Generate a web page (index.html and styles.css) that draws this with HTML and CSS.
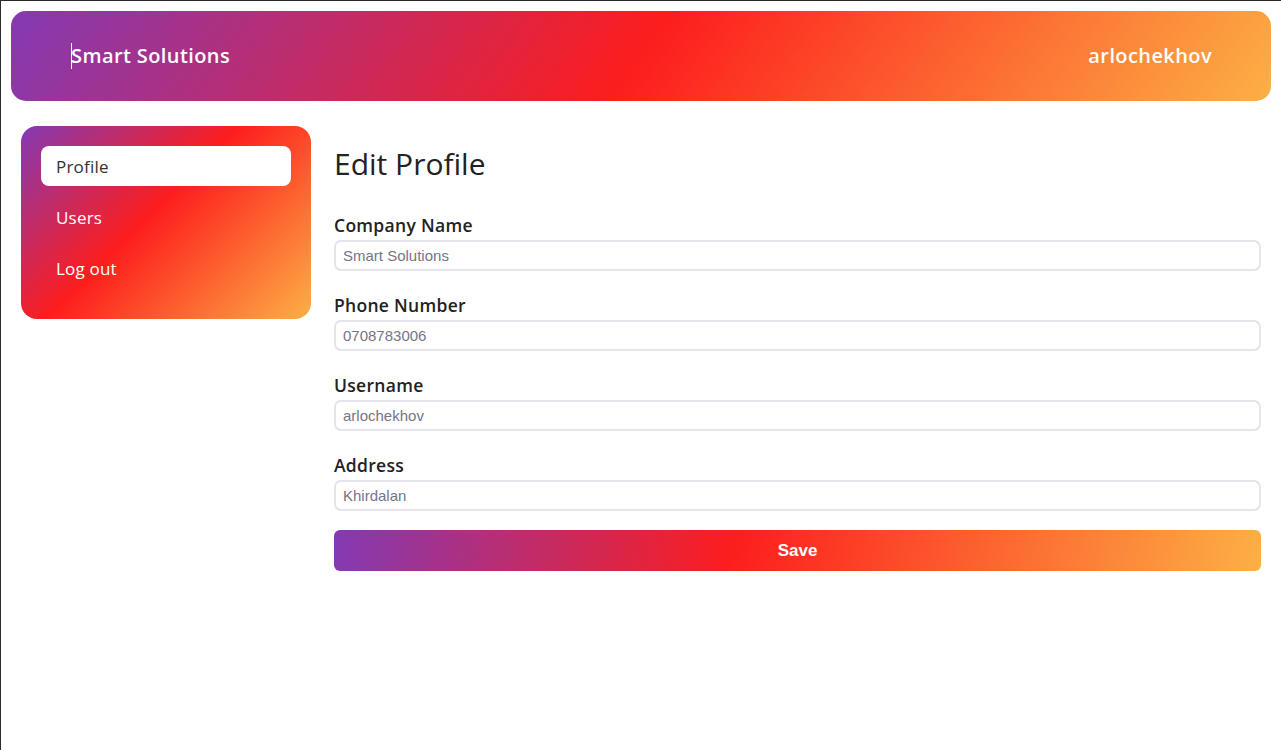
FILE: index.html
```html
<!DOCTYPE html>
<html lang="en">
<head>
<meta charset="utf-8">
<title>Edit Profile</title>
<link rel="stylesheet" href="styles.css">
</head>
<body>
<div class="frame">
  <header class="topbar">
    <div class="brand"><span class="caret"></span>Smart Solutions</div>
    <div class="user">arlochekhov</div>
  </header>
  <div class="content">
    <nav class="sidebar">
      <a class="nav-item active" href="#">Profile</a>
      <a class="nav-item" href="#">Users</a>
      <a class="nav-item" href="#">Log out</a>
    </nav>
    <main class="main">
      <h1 class="title">Edit Profile</h1>
      <form class="form">
        <div class="field">
          <label class="label">Company Name</label>
          <input class="input" type="text" placeholder="Smart Solutions">
        </div>
        <div class="field">
          <label class="label">Phone Number</label>
          <input class="input" type="text" placeholder="0708783006">
        </div>
        <div class="field">
          <label class="label">Username</label>
          <input class="input" type="text" placeholder="arlochekhov">
        </div>
        <div class="field">
          <label class="label">Address</label>
          <input class="input" type="text" placeholder="Khirdalan">
        </div>
        <button class="save" type="button">Save</button>
      </form>
    </main>
  </div>
</div>
</body>
</html>
```
FILE: styles.css
```css
* { box-sizing: border-box; }
html, body { margin: 0; padding: 0; background: #fff; }
body { font-family: "Open Sans", "Liberation Sans", sans-serif; color: #222; }
.frame {
  min-height: 750px;
  border-top: 1px solid #2a2a2a;
  border-left: 1px solid #2a2a2a;
}
.topbar {
  margin: 10px 10px 0 10px;
  height: 90px;
  border-radius: 15px;
  background: linear-gradient(125deg, #833ab4 0%, #fd1d1d 50%, #fcb045 100%);
  display: flex;
  align-items: center;
  justify-content: space-between;
  padding: 0 59px 0 60px;
  color: #fff;
}
.brand, .user {
  font-size: 20px;
  font-weight: 600;
  letter-spacing: 0.4px;
  display: flex;
  align-items: center;
  margin-top: -1px;
}
.caret {
  display: inline-block;
  width: 1px;
  height: 26px;
  background: #fff;
  margin-right: -1px;
}
.content {
  display: flex;
  padding: 25px 20px 0 20px;
  gap: 23px;
}
.sidebar {
  width: 290px;
  flex: none;
  align-self: flex-start;
  border-radius: 16px;
  background: linear-gradient(135deg, #833ab4 0%, #fd1d1d 45%, #fcb045 100%);
  padding: 20px 20px 31px;
  display: flex;
  flex-direction: column;
  gap: 11px;
}
.nav-item {
  display: flex;
  align-items: center;
  height: 40px;
  padding-left: 15px;
  border-radius: 8px;
  color: #fff;
  text-decoration: none;
  font-size: 17px;
  font-weight: 500;
  letter-spacing: 0.2px;
}
.nav-item.active {
  background: #fff;
  color: #333;
  font-weight: 400;
}
.main { flex: 1; min-width: 0; }
.title {
  margin: 18px 0 26px;
  font-size: 30px;
  font-weight: 500;
  line-height: 40px;
  color: #222;
}
.form { display: flex; flex-direction: column; gap: 19px; }
.field { display: flex; flex-direction: column; }
.label {
  font-size: 17.5px;
  font-weight: 600;
  letter-spacing: 0.3px;
  color: #222;
  line-height: 24px;
  padding-top: 3px;
  margin-bottom: 3px;
}
.input {
  height: 31px;
  border: 2px solid #e4e4ea;
  border-radius: 7px;
  padding: 0 7px;
  font-family: "Liberation Sans", Arial, sans-serif;
  font-size: 15px;
  background: #fff;
  outline: none;
}
.input::placeholder { color: #757588; }
.save {
  height: 41px;
  border: none;
  border-radius: 6px;
  background: linear-gradient(100deg, #833ab4 0%, #fd1d1d 43%, #fcb045 100%);
  color: #fff;
  font-family: "Liberation Sans", Arial, sans-serif;
  font-weight: 700;
  font-size: 17px;
}
```
